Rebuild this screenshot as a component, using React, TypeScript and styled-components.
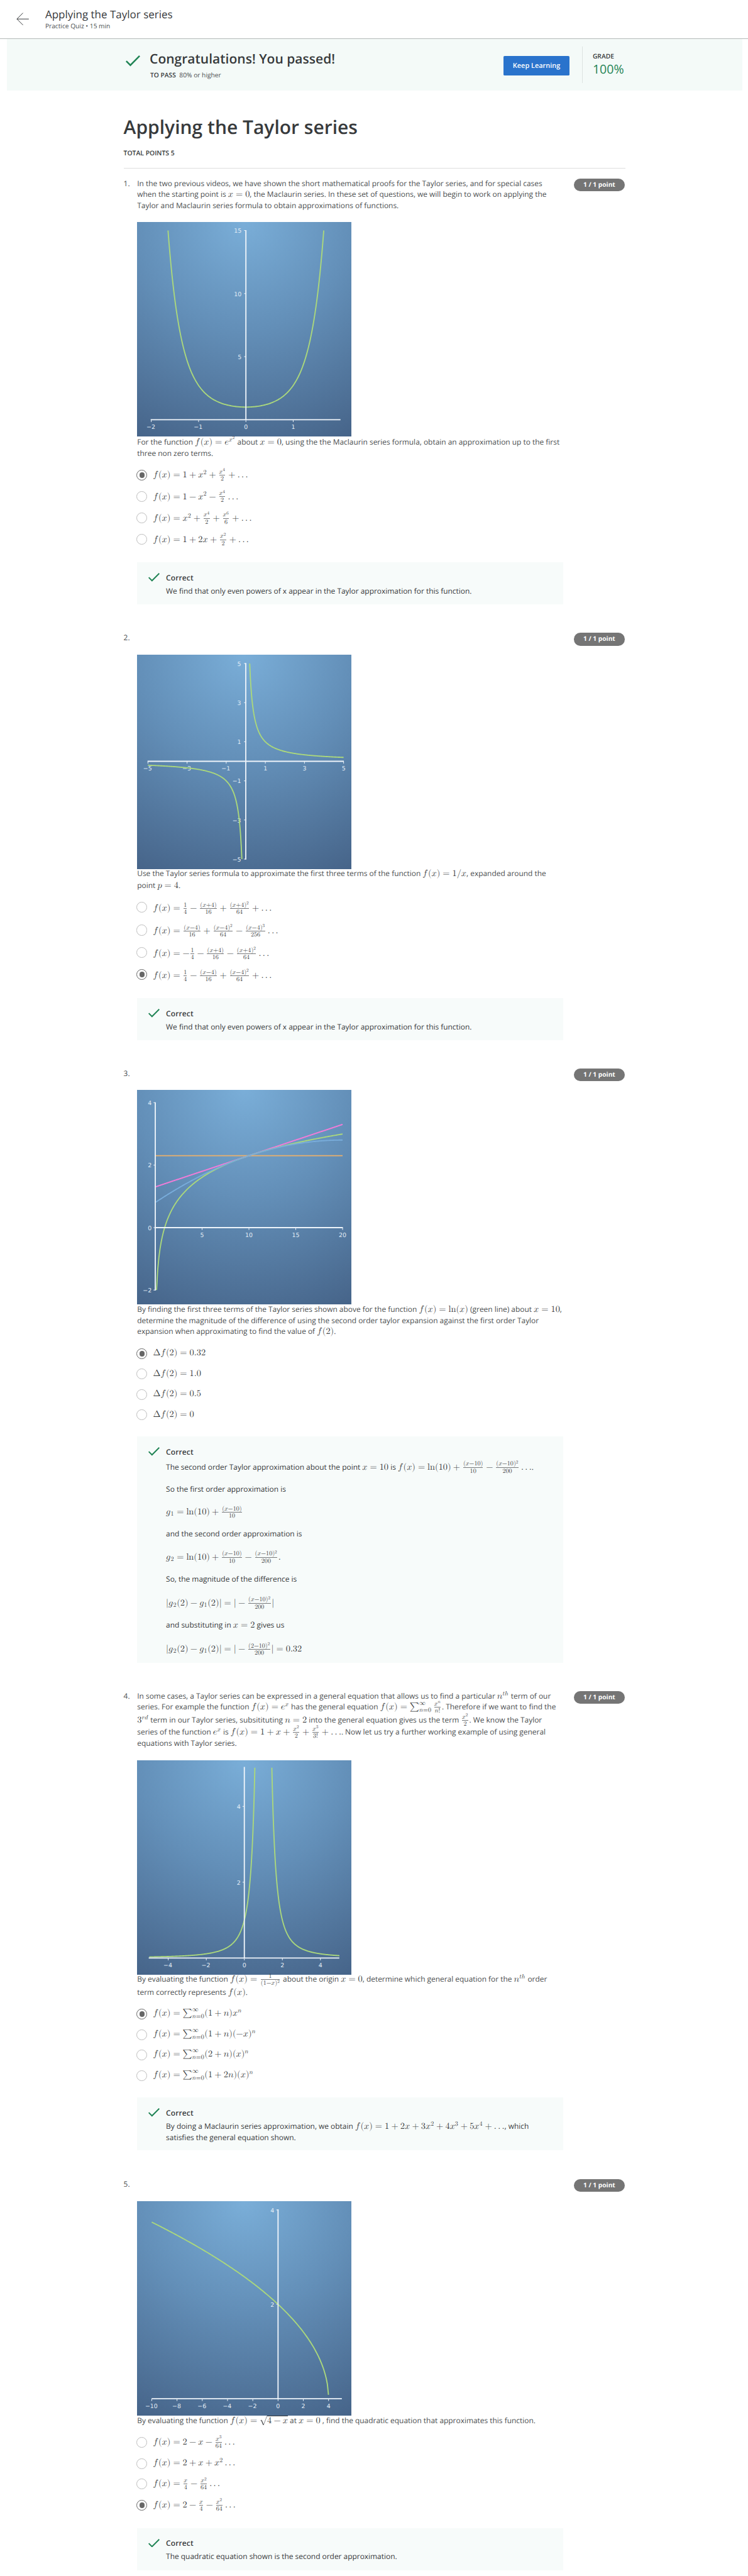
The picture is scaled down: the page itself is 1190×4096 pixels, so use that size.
import React, { ReactNode } from 'react';
import styled, { createGlobalStyle } from 'styled-components';

/* Every length below is written in design pixels and scaled down once, here. */
const SCALE = 0.6201;
const u = (n: number) => `${+(n * SCALE).toFixed(3)}px`;

const ink = '#373a3c';
const body = '#4c4f51';
const green = '#1f8354';

const Global = createGlobalStyle`
  html, body { margin: 0; padding: 0; background: #fff; }
  body {
    font-family: "Open Sans", "Noto Sans", sans-serif;
    color: ${body};
    text-rendering: geometricPrecision;
  }
  * { box-sizing: border-box; }
`;

/* ------------------------------ math ------------------------------ */

const MathSpan = styled.span`
  font-family: "Latin Modern Math", "Liberation Serif", serif;
  font-size: ${u(23.2)};
  line-height: 1;
  color: ${ink};
  white-space: nowrap;
`;
const Glyph = styled.span<{ $w: number; $gap: number }>`
  display: inline-block;
  width: ${(p) => p.$w}em;
  margin-left: ${(p) => p.$gap}em;
  line-height: 1;
`;
const Cluster = styled.span<{ $gap: number }>`
  display: inline-block;
  margin-left: ${(p) => p.$gap}em;
  line-height: 1;
`;
const Script = styled.span<{ $raise: number; $small: number }>`
  display: inline-block;
  font-size: ${(p) => p.$small}em;
  vertical-align: ${(p) => p.$raise}em;
  margin: -0.6em 0.07em -0.4em 0;
  line-height: 1;
`;
const Frac = styled.span<{ $gap: number }>`
  display: inline-block;
  font-size: 0.7em;
  vertical-align: -0.493em;
  text-align: center;
  margin: -0.8em 0.17em -0.4em ${(p) => 0.17 + p.$gap / 0.7}em;
`;
const Numerator = styled.span`
  display: block;
  line-height: 1.024;
  border-bottom: 1px solid #77797b;
`;
const Denominator = styled.span`
  display: block;
  line-height: 1.06;
`;
const Limits = styled.span`
  display: inline-block;
  font-size: 0.7em;
  vertical-align: -0.4em;
  margin: -0.8em 0.07em -0.4em 0;
  line-height: 1.086;
`;
const Limit = styled.span`
  display: block;
`;
const Radicand = styled.span`
  display: inline-block;
  border-top: 1px solid ${ink};
  line-height: 1;
`;
const SurdIcon = styled.svg`
  display: inline-block;
  width: 0.833em;
  height: 1.08em;
  vertical-align: -0.23em;
`;

type Kind = 'ord' | 'bin' | 'rel' | 'open' | 'close' | 'inner' | 'op';
type Atom = {
  kind: Kind;
  text?: string;
  w?: number;
  frac?: [Atom[], Atom[]];
  root?: Atom[];
  sup?: Atom[];
  sub?: Atom[];
};

const WIDTHS: Record<string, number> = {
  f: 0.598, x: 0.572, n: 0.6, g: 0.513, e: 0.466, p: 0.503, t: 0.361, h: 0.576, r: 0.479, d: 0.52,
  '(': 0.389, ')': 0.389, '|': 0.278, '=': 0.778, '+': 0.778, '-': 0.778, '/': 0.5, '.': 0.278, '!': 0.278,
};
const italic = (c: string) => (c === 'h' ? '\u210E' : String.fromCodePoint(0x1d44e + c.charCodeAt(0) - 97));

function parse(src: string): Atom[] {
  let i = 0;
  const group = (): Atom[] => {
    if (src[i] === '{') {
      i++;
      const out = list();
      i++;
      return out;
    }
    return [atom()];
  };
  const atom = (): Atom => {
    const c = src[i];
    if (c === '\\') {
      const name = /^(frac|sqrt|sum|infty|ln|Delta|ldots)/.exec(src.slice(i + 1))![0];
      i += name.length + 1;
      if (name === 'frac') return { kind: 'ord', frac: [group(), group()] };
      if (name === 'sqrt') return { kind: 'ord', root: group() };
      if (name === 'sum') return { kind: 'op', text: '\u2211', w: 1.056 };
      if (name === 'infty') return { kind: 'ord', text: '\u221E', w: 1 };
      if (name === 'ln') return { kind: 'ord', text: 'ln', w: 0.834 };
      if (name === 'Delta') return { kind: 'ord', text: '\u0394', w: 0.833 };
      return { kind: 'inner', text: 'ldots' };
    }
    i++;
    const w = WIDTHS[c] ?? 0.5;
    if (/[a-z]/.test(c)) return { kind: 'ord', text: italic(c), w };
    if (c === '=') return { kind: 'rel', text: c, w };
    if (c === '+') return { kind: 'bin', text: c, w };
    if (c === '-') return { kind: 'bin', text: '\u2212', w };
    if (c === '(') return { kind: 'open', text: c, w };
    if (c === ')') return { kind: 'close', text: c, w };
    return { kind: 'ord', text: c, w };
  };
  const list = (): Atom[] => {
    const out: Atom[] = [];
    while (i < src.length && src[i] !== '}') {
      if (src[i] === '^') {
        i++;
        out[out.length - 1].sup = group();
      } else if (src[i] === '_') {
        i++;
        out[out.length - 1].sub = group();
      } else {
        const a = atom();
        const prev = out[out.length - 1];
        if (a.kind === 'bin' && (!prev || ['bin', 'rel', 'open'].includes(prev.kind))) a.kind = 'ord';
        out.push(a);
      }
    }
    return out;
  };
  return list();
}

const gapBetween = (a: Atom | undefined, b: Atom, level: number) => {
  if (!a || level > 0) return 0;
  if (a.kind === 'rel' || b.kind === 'rel') return 0.278;
  if (a.kind === 'bin' || b.kind === 'bin') return 0.222;
  if (a.kind === 'inner' || b.kind === 'inner') return 0.167;
  if (a.kind === 'op' && b.kind !== 'open') return 0.167;
  return 0;
};

function Atoms({ list, level = 0 }: { list: Atom[]; level?: number }) {
  const small = level === 0 ? 0.7 : 0.714;
  return (
    <>
      {list.map((a, k) => {
        const gap = gapBetween(list[k - 1], a, level);
        if (a.frac)
          return (
            <Frac key={k} $gap={gap}>
              <Numerator><Atoms list={a.frac[0]} level={1} /></Numerator>
              <Denominator><Atoms list={a.frac[1]} level={1} /></Denominator>
            </Frac>
          );
        if (a.root)
          return (
            <Cluster key={k} $gap={gap}>
              <SurdIcon viewBox="0 0 83 108">
                <path d="M8 58 L20 48 L42 106 L83 1.5" fill="none" stroke={ink} strokeWidth="4" />
                <path d="M20 50 L42 102" fill="none" stroke={ink} strokeWidth="7" />
              </SurdIcon>
              <Radicand><Atoms list={a.root} /></Radicand>
            </Cluster>
          );
        if (a.text === 'ldots')
          return (
            <Cluster key={k} $gap={gap}>
              <Glyph $w={0.278} $gap={0}>.</Glyph>
              <Glyph $w={0.278} $gap={0.167}>.</Glyph>
              <Glyph $w={0.278} $gap={0.167}>.</Glyph>
            </Cluster>
          );
        const base = <Glyph $w={a.w!} $gap={gap}>{a.text}</Glyph>;
        if (a.kind === 'op')
          return (
            <React.Fragment key={k}>
              {base}
              <Limits>
                <Limit><Atoms list={a.sup ?? []} level={1} /></Limit>
                <Limit><Atoms list={a.sub ?? []} level={1} /></Limit>
              </Limits>
            </React.Fragment>
          );
        return (
          <React.Fragment key={k}>
            {base}
            {a.sub && <Script $raise={-0.21} $small={small}><Atoms list={a.sub} level={level + 1} /></Script>}
            {a.sup && <Script $raise={0.5} $small={small}><Atoms list={a.sup} level={level + 1} /></Script>}
          </React.Fragment>
        );
      })}
    </>
  );
}

const M = ({ t }: { t: string }) => (
  <MathSpan>
    <Atoms list={parse(t)} />
  </MathSpan>
);

/* ------------------------------ header ------------------------------ */

const Page = styled.div`
  width: 100%;
  height: ${u(6605)};
  overflow: hidden;
`;
const TopBar = styled.header`
  display: flex;
  height: ${u(100)};
  padding-left: ${u(42)};
  border-bottom: 1px solid #b4b9b8;
`;
const BackArrow = styled.svg`
  width: ${u(32)};
  height: ${u(33)};
  margin-top: ${u(33)};
  flex: none;
`;
const TopTitles = styled.div`
  margin-left: ${u(42)};
  padding-top: ${u(18)};
`;
const TopTitle = styled.div`
  font-size: ${u(27.4)};
  line-height: ${u(38)};
  color: ${ink};
`;
const TopMeta = styled.div`
  font-size: ${u(16.44)};
  line-height: ${u(22)};
  color: ${body};
`;
const Banner = styled.section`
  display: flex;
  height: ${u(132)};
  margin: 0 ${u(15)} 0 ${u(17)};
  padding-left: ${u(306)};
  background: #f4faf8;
`;
const BannerCheck = styled.svg`
  width: ${u(37)};
  height: ${u(28)};
  margin-top: ${u(42.5)};
  flex: none;
`;
const BannerText = styled.div`
  width: ${u(908)};
  margin-left: ${u(24)};
  padding-top: ${u(28.5)};
`;
const BannerTitle = styled.h2`
  margin: 0;
  font-size: ${u(33.94)};
  font-weight: 600;
  line-height: ${u(46)};
  color: ${ink};
`;
const PassLine = styled.div`
  display: flex;
  gap: ${u(9)};
  margin: ${u(8.5)} 0 0 ${u(1.5)};
  font-size: ${u(16.5)};
  line-height: ${u(22)};
`;
const Label = styled.strong`
  font-weight: 600;
  color: ${ink};
`;
const KeepButton = styled.button`
  width: ${u(169)};
  height: ${u(50)};
  margin-top: ${u(44)};
  padding: 0;
  border: 0;
  border-radius: ${u(3)};
  background: #2a73cc;
  color: #fff;
  font: 600 ${u(17.6)} "Open Sans", sans-serif;
  text-rendering: geometricPrecision;
`;
const GradeBox = styled.div`
  height: ${u(93)};
  margin: ${u(20)} 0 0 ${u(33)};
  padding: ${u(15.5)} 0 0 ${u(25)};
  border-left: 1px solid #dde3e1;
`;
const GradeLabel = styled.div`
  font-size: ${u(16.58)};
  font-weight: 600;
  line-height: ${u(22)};
  color: ${ink};
`;
const GradeValue = styled.div`
  font-size: ${u(31.6)};
  line-height: ${u(40)};
  color: ${green};
`;
const Content = styled.main`
  margin-left: ${u(317)};
  width: ${u(1287)};
`;
const Title = styled.h1`
  margin: 0;
  padding-top: ${u(61)};
  font-size: ${u(48.4)};
  font-weight: 600;
  line-height: ${u(66)};
  color: ${ink};
`;
const TotalPoints = styled.div`
  height: ${u(73.5)};
  padding-top: ${u(24.5)};
  border-bottom: 1px solid #dedede;
  font-size: ${u(16.76)};
  font-weight: 600;
  line-height: ${u(22)};
  color: ${ink};
`;

/* ------------------------------ questions ------------------------------ */

const Questions = styled.div`
  padding-top: ${u(25.3)};
`;
const QuestionRow = styled.section<{ $h: number }>`
  display: flex;
  align-items: flex-start;
  height: ${(p) => u(p.$h)};
  font-size: ${u(19.24)};
  line-height: ${u(28)};
`;
const QNumber = styled.div`
  width: ${u(35)};
  flex: none;
`;
const QBody = styled.div`
  width: ${u(1093)};
  flex: none;
`;
const Pill = styled.div`
  width: ${u(131)};
  height: ${u(33)};
  margin-left: ${u(27)};
  border-radius: ${u(16.5)};
  background: #757575;
  color: #fff;
  font-size: ${u(16.45)};
  font-weight: 700;
  line-height: ${u(32)};
  text-align: center;
`;
const Line = styled.p<{ $gap: number }>`
  margin: ${(p) => u(p.$gap)} 0 0;
  height: ${u(28)};
  white-space: nowrap;
`;
const Lines = ({ items }: { items: [ReactNode, number?][] }) => (
  <>
    {items.map(([c, gap = 0], k) => (
      <Line key={k} $gap={gap}>{c}</Line>
    ))}
  </>
);
const Figure = styled.svg`
  display: block;
  width: ${u(550)};
  height: ${u(550)};
  margin-top: ${u(28)};
`;
const Options = styled.div<{ $top: number }>`
  padding-top: ${(p) => u(p.$top)};
`;
const OptionRow = styled.label<{ $gap: number }>`
  display: flex;
  height: ${u(28)};
  margin-top: ${(p) => u(p.$gap)};
  margin-left: ${u(-1.5)};
`;
const Radio = styled.span<{ $on?: boolean }>`
  display: flex;
  align-items: center;
  justify-content: center;
  width: ${u(27.6)};
  height: ${u(27.6)};
  flex: none;
  border: ${(p) => (p.$on ? '1.6px' : '1.4px')} solid ${(p) => (p.$on ? '#666' : '#bdbdbd')};
  border-radius: 50%;
`;
const RadioDot = styled.span`
  width: ${u(14)};
  height: ${u(14)};
  border-radius: 50%;
  background: #666;
`;
const OptionText = styled.span<{ $dy: number }>`
  margin: ${(p) => u(p.$dy)} 0 0 ${u(14.5)};
  white-space: nowrap;
`;
const Feedback = styled.div<{ $top: number; $h: number }>`
  display: flex;
  height: ${(p) => u(p.$h)};
  margin-top: ${(p) => u(p.$top)};
  padding-top: ${u(25.2)};
  background: #f7fbfa;
  color: ${ink};
`;
const FeedbackCheck = styled.svg`
  width: ${u(29)};
  height: ${u(22)};
  margin: ${u(2.5)} ${u(16)} 0 ${u(29)};
  flex: none;
`;
const FeedbackTitle = styled.div`
  font-size: ${u(19.3)};
  font-weight: 600;
  letter-spacing: ${u(0.22)};
`;

const Check = () => (
  <path d="M1.4 14.6 L12 25.2 L35.6 1.6" fill="none" stroke={green} strokeWidth="4" />
);

/* ------------------------------ charts ------------------------------ */

type Curve = { fn: (x: number) => number; from: number; to: number; color: string; width?: number };
type ChartSpec = {
  id: string;
  ox: number;
  oy: number;
  sx: number;
  sy: number;
  xAxis: [number, number];
  yAxis: [number, number];
  xTicks: number[];
  yTicks: number[];
  labelX: number;
  labelDy: number;
  curves: Curve[];
};
const lime = '#abd87c';

const num = (v: number) => (v < 0 ? `\u2212${-v}` : `${v}`);

function Chart(c: ChartSpec) {
  const X = (v: number) => c.ox + v * c.sx;
  const Y = (v: number) => c.oy - v * c.sy;
  const trace = (k: Curve) => {
    const n = 160;
    return Array.from({ length: n + 1 }, (_, i) => {
      const x = k.from + ((k.to - k.from) * i) / n;
      return `${i ? 'L' : 'M'}${X(x).toFixed(2)} ${Y(k.fn(x)).toFixed(2)}`;
    }).join('');
  };
  return (
    <Figure viewBox="0 0 550 550">
      <defs>
        <radialGradient id={c.id} gradientUnits="userSpaceOnUse" cx="275" cy="0" r="615">
          <stop offset="0" stopColor="#7aaed8" />
          <stop offset="0.45" stopColor="#638fb8" />
          <stop offset="1" stopColor="#466489" />
        </radialGradient>
      </defs>
      <rect width="550" height="550" fill={`url(#${c.id})`} />
      <g fill="#e3edf6" fontFamily="DejaVu Sans, sans-serif" fontSize="15.2">
        {c.xTicks.map((v) => (
          <text key={v} x={X(v) + (v < 0 ? -1 : 0)} y={c.oy + c.labelDy} textAnchor="middle">{num(v)}</text>
        ))}
        {c.yTicks.map((v) => (
          <text key={v} x={c.labelX} y={Y(v) + 6} textAnchor="end">{num(v)}</text>
        ))}
      </g>
      <g stroke="#eef4fa" strokeWidth="1.6">
        {c.xTicks.map((v) => <line key={v} x1={X(v)} x2={X(v)} y1={c.oy} y2={c.oy + 6} />)}
        {c.yTicks.map((v) => <line key={v} x1={X(0) - 4.5} x2={X(0)} y1={Y(v)} y2={Y(v)} />)}
      </g>
      {c.curves.map((k, i) => (
        <path key={i} d={trace(k)} fill="none" stroke={k.color} strokeWidth={k.width ?? 3} />
      ))}
      <g stroke="#eef4fa" strokeWidth="3">
        <line x1={c.xAxis[0]} x2={c.xAxis[1]} y1={c.oy} y2={c.oy} />
        <line x1={c.ox} x2={c.ox} y1={c.yAxis[0]} y2={c.yAxis[1]} />
      </g>
    </Figure>
  );
}

const charts: ChartSpec[] = [
  {
    id: 'g1', ox: 279.3, oy: 507, sx: 121.4, sy: 32.35, xAxis: [35, 522], yAxis: [21, 507],
    xTicks: [-2, -1, 0, 1], yTicks: [5, 10, 15], labelX: 268, labelDy: 24,
    curves: [{ fn: (x) => Math.exp(x * x), from: -1.6456, to: 1.6456, color: lime }],
  },
  {
    id: 'g2', ox: 279, oy: 273.4, sx: 50.2, sy: 50.15, xAxis: [27, 530.5], yAxis: [21.5, 525.5],
    xTicks: [-5, -3, -1, 1, 3, 5], yTicks: [5, 3, 1, -1, -3, -5], labelX: 267, labelDy: 24,
    curves: [
      { fn: (x) => 1 / x, from: -5, to: -0.2, color: lime },
      { fn: (x) => 1 / x, from: 0.2, to: 5, color: lime },
    ],
  },
  {
    id: 'g3', ox: 46.8, oy: 353.1, sx: 24.03, sy: 80.1, xAxis: [46, 528], yAxis: [32, 514.5],
    xTicks: [5, 10, 15, 20], yTicks: [4, 2, 0, -2], labelX: 37.5, labelDy: 24,
    curves: [
      { fn: () => Math.log(10), from: 0.06, to: 20, color: '#e9b06c', width: 3 },
      { fn: (x) => Math.log(10) + (x - 10) / 10, from: 0.06, to: 20, color: '#f07cd8', width: 3.2 },
      { fn: (x) => Math.log(x), from: 0.1353, to: 20, color: lime, width: 3 },
      { fn: (x) => Math.log(10) + (x - 10) / 10 - (x - 10) ** 2 / 200, from: 0.06, to: 20, color: '#79addb', width: 3 },
    ],
  },
  {
    id: 'g4', ox: 275.3, oy: 507, sx: 48.8, sy: 97.2, xAxis: [30, 519], yAxis: [17, 508],
    xTicks: [-4, -2, 0, 2, 4], yTicks: [4, 2], labelX: 265.5, labelDy: 24,
    curves: [
      { fn: (x) => 1 / (1 - x) ** 2, from: -5, to: 0.5537, color: lime },
      { fn: (x) => 1 / (1 - x) ** 2, from: 1.4463, to: 5, color: lime },
    ],
  },
  {
    id: 'g5', ox: 361.8, oy: 506.5, sx: 32.4, sy: 121, xAxis: [37.5, 525.5], yAxis: [21, 507],
    xTicks: [-10, -8, -6, -4, -2, 0, 2, 4], yTicks: [4, 2], labelX: 352, labelDy: 24,
    curves: [{ fn: (x) => Math.sqrt(4 - x), from: -10, to: 3.993, color: lime }],
  },
];

/* ------------------------------ content ------------------------------ */

type QuestionData = {
  h: number;
  prompt: [ReactNode, number?][];
  after: [ReactNode, number?][];
  top: number;
  options: [string, number, number][];
  picked: number;
  fbTop: number;
  fbHeight: number;
  feedback: [ReactNode, number?][];
};

const questions: QuestionData[] = [
  {
    h: 1164.7,
    prompt: [
      ['In the two previous videos, we have shown the short mathematical proofs for the Taylor series, and for special cases'],
      [<>when the starting point is <M t="x=0" />, the Maclaurin series. In these set of questions, we will begin to work on applying the</>],
      ['Taylor and Maclaurin series formula to obtain approximations of functions.'],
    ],
    after: [
      [<>For the function <M t="f(x)=e^{x^2}" /> about <M t="x=0" />, using the the Maclaurin series formula, obtain an approximation up to the first</>, 1.2],
      ['three non zero terms.', 1],
    ],
    top: 26.8,
    options: [
      ['f(x)=1+x^2+\\frac{x^4}{2}+\\ldots', 0, 0.7],
      ['f(x)=1-x^2-\\frac{x^4}{2}\\ldots', 27, 0.7],
      ['f(x)=x^2+\\frac{x^4}{2}+\\frac{x^6}{6}+\\ldots', 27, 0.7],
      ['f(x)=1+2x+\\frac{x^2}{2}+\\ldots', 27, 0.7],
    ],
    picked: 0,
    fbTop: 44,
    fbHeight: 109,
    feedback: [['We find that only even powers of x appear in the Taylor approximation for this function.', 7.6]],
  },
  {
    h: 1117,
    prompt: [['']],
    after: [
      [<>Use the Taylor series formula to approximate the first three terms of the function <M t="f(x)=1/x" />, expanded around the</>, -0.7],
      [<>point <M t="p=4" />.</>, 1.6],
    ],
    top: 27.1,
    options: [
      ['f(x)=\\frac{1}{4}-\\frac{(x+4)}{16}+\\frac{(x+4)^2}{64}+\\ldots', 0, 3.8],
      ['f(x)=\\frac{(x-4)}{16}+\\frac{(x-4)^2}{64}-\\frac{(x-4)^3}{256}\\ldots', 31, 3],
      ['f(x)=-\\frac{1}{4}-\\frac{(x+4)}{16}-\\frac{(x+4)^2}{64}\\ldots', 29.3, 3],
      ['f(x)=\\frac{1}{4}-\\frac{(x-4)}{16}+\\frac{(x-4)^2}{64}+\\ldots', 28.5, 3],
    ],
    picked: 3,
    fbTop: 46,
    fbHeight: 108.5,
    feedback: [['We find that only even powers of x appear in the Taylor approximation for this function.', 7.6]],
  },
  {
    h: 1596.3,
    prompt: [['']],
    after: [
      [<>By finding the first three terms of the Taylor series shown above for the function <M t="f(x)=\ln(x)" /> (green line) about <M t="x=10" />,</>, -0.3],
      ['determine the magnitude of the difference of using the second order taylor expansion against the first order Taylor', 0.2],
      [<>expansion when approximating to find the value of <M t="f(2)" />.</>, 0.2],
    ],
    top: 27.5,
    options: [
      ['\\Deltaf(2)=0.32', 0, -0.8],
      ['\\Deltaf(2)=1.0', 24.4, -0.8],
      ['\\Deltaf(2)=0.5', 24.4, -0.8],
      ['\\Deltaf(2)=0', 24.4, -0.8],
    ],
    picked: 0,
    fbTop: 41.4,
    fbHeight: 579.8,
    feedback: [
      [<>The second order Taylor approximation about the point <M t="x=10" /> is <M t="f(x)=\ln(10)+\frac{(x-10)}{10}-\frac{(x-10)^2}{200}\ldots" />.</>, 12.4],
      ['So the first order approximation is', 28.7],
      [<M t="g_1=\ln(10)+\frac{(x-10)}{10}" />, 30.4],
      ['and the second order approximation is', 28.1],
      [<M t="g_2=\ln(10)+\frac{(x-10)}{10}-\frac{(x-10)^2}{200}." />, 31.5],
      ['So, the magnitude of the difference is', 29.2],
      [<M t="|g_2(2)-g_1(2)|=|-\frac{(x-10)^2}{200}|" />, 32.6],
      [<>and substituting in <M t="x=2" /> gives us</>, 28.2],
      [<M t="|g_2(2)-g_1(2)|=|-\frac{(2-10)^2}{200}|=0.32" />, 33.7],
    ],
  },
  {
    h: 1251.9,
    prompt: [
      [<>In some cases, a Taylor series can be expressed in a general equation that allows us to find a particular <M t="n^{th}" /> term of our</>],
      [<>series. For example the function <M t="f(x)=e^x" /> has the general equation <M t="f(x)=\sum_{n=0}^\infty\frac{x^n}{n!}" />. Therefore if we want to find the</>, 0.7],
      [<><M t="3^{rd}" /> term in our Taylor series, subsitituting <M t="n=2" /> into the general equation gives us the term <M t="\frac{x^2}{2}" />. We know the Taylor</>, 5.1],
      [<>series of the function <M t="e^x" /> is <M t="f(x)=1+x+\frac{x^2}{2}+\frac{x^3}{3!}+\ldots" />. Now let us try a further working example of using general</>, 2.8],
      ['equations with Taylor series.', 1.2],
    ],
    after: [
      [<>By evaluating the function <M t="f(x)=\frac{1}{(1-x)^2}" /> about the origin <M t="x=0" />, determine which general equation for the <M t="n^{th}" /> order</>, -0.7],
      [<>term correctly represents <M t="f(x)" />.</>, 5.2],
    ],
    top: 27,
    options: [
      ['f(x)=\\sum_{n=0}^\\infty(1+n)x^n', 0, -1.4],
      ['f(x)=\\sum_{n=0}^\\infty(1+n)(-x)^n', 24.5, -1.4],
      ['f(x)=\\sum_{n=0}^\\infty(2+n)(x)^n', 24.5, -1.4],
      ['f(x)=\\sum_{n=0}^\\infty(1+2n)(x)^n', 24.5, -1.4],
    ],
    picked: 0,
    fbTop: 41.8,
    fbHeight: 136,
    feedback: [
      [<>By doing a Maclaurin series approximation, we obtain <M t="f(x)=1+2x+3x^2+4x^3+5x^4+\ldots" />, which</>, 7.7],
      ['satisfies the general equation shown.', 0.8],
    ],
  },
  {
    h: 1017,
    prompt: [['']],
    after: [
      [<>By evaluating the function <M t="f(x)=\sqrt{4-x}" /> at <M t="x=0" /> , find the quadratic equation that approximates this function.</>],
    ],
    top: 27.4,
    options: [
      ['f(x)=2-x-\\frac{x^3}{64}\\ldots', 0, 0.5],
      ['f(x)=2+x+x^2\\ldots', 26.6, -1.5],
      ['f(x)=\\frac{x}{4}-\\frac{x^2}{64}\\ldots', 24, 0.7],
      ['f(x)=2-\\frac{x}{4}-\\frac{x^2}{64}\\ldots', 26.7, 0.7],
    ],
    picked: 3,
    fbTop: 44,
    fbHeight: 109.3,
    feedback: [['The quadratic equation shown is the second order approximation.', 7.6]],
  },
];

function Question({ q, n }: { q: QuestionData; n: number }) {
  return (
    <QuestionRow $h={q.h}>
      <QNumber>{n}.</QNumber>
      <QBody>
        <Lines items={q.prompt} />
        <Chart {...charts[n - 1]} />
        <Lines items={q.after} />
        <Options $top={q.top}>
          {q.options.map(([t, gap, dy], k) => (
            <OptionRow key={k} $gap={gap}>
              <Radio $on={q.picked === k}>{q.picked === k && <RadioDot />}</Radio>
              <OptionText $dy={dy}><M t={t} /></OptionText>
            </OptionRow>
          ))}
        </Options>
        <Feedback $top={q.fbTop} $h={q.fbHeight}>
          <FeedbackCheck viewBox="0 0 37 28"><Check /></FeedbackCheck>
          <div>
            <FeedbackTitle>Correct</FeedbackTitle>
            <Lines items={q.feedback} />
          </div>
        </Feedback>
      </QBody>
      <Pill>1 / 1 point</Pill>
    </QuestionRow>
  );
}

export default function App() {
  return (
    <Page>
      <Global />
      <TopBar>
        <BackArrow viewBox="0 0 32 33">
          <path d="M17 1 L1.5 16.5 L17 32 M1.5 16.5 H32" fill="none" stroke={ink} strokeWidth="1.6" />
        </BackArrow>
        <TopTitles>
          <TopTitle>Applying the Taylor series</TopTitle>
          <TopMeta>Practice Quiz • 15 min</TopMeta>
        </TopTitles>
      </TopBar>
      <Banner>
        <BannerCheck viewBox="0 0 37 28"><Check /></BannerCheck>
        <BannerText>
          <BannerTitle>Congratulations! You passed!</BannerTitle>
          <PassLine><Label>TO PASS</Label><span>80% or higher</span></PassLine>
        </BannerText>
        <KeepButton>Keep Learning</KeepButton>
        <GradeBox>
          <GradeLabel>GRADE</GradeLabel>
          <GradeValue>100%</GradeValue>
        </GradeBox>
      </Banner>
      <Content>
        <Title>Applying the Taylor series</Title>
        <TotalPoints>TOTAL POINTS 5</TotalPoints>
        <Questions>
          {questions.map((q, k) => (
            <Question key={k} q={q} n={k + 1} />
          ))}
        </Questions>
      </Content>
    </Page>
  );
}
